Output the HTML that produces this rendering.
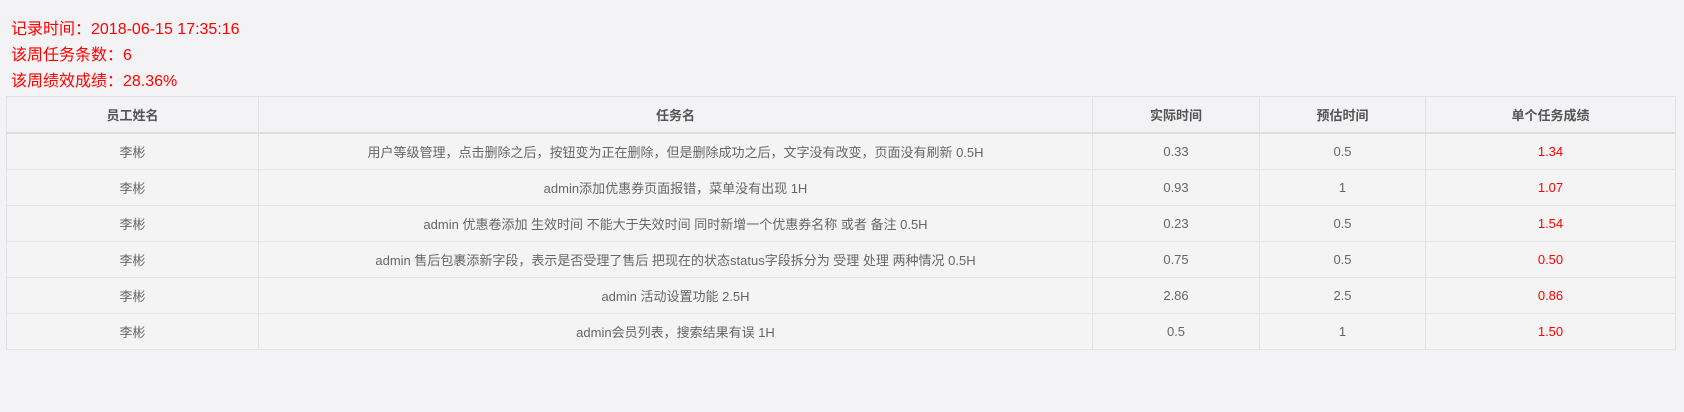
<!DOCTYPE html>
<html><head><meta charset="utf-8"><style>
html,body{margin:0;padding:0;background:#f3f3f5;width:1684px;height:412px;overflow:hidden;font-family:"Liberation Sans","Noto Sans CJK SC",sans-serif;}
.info{position:absolute;left:11px;color:#ff0000;font-size:16px;line-height:20px;}
table{position:absolute;left:6px;top:96px;width:1670px;border-collapse:collapse;table-layout:fixed;font-size:13px;color:#666;background:#f4f4f5;}
td,th{border:1px solid #e2e2e4;text-align:center;height:35px;padding:0;}
th{font-weight:bold;color:#555;background:#f3f3f5;border-bottom:2px solid #ddd;}
.r{color:#ff0000;}
</style></head><body>
<div class="info" style="top:20px">记录时间：2018-06-15 17:35:16</div>
<div class="info" style="top:46px">该周任务条数：6</div>
<div class="info" style="top:72px">该周绩效成绩：28.36%</div>
<table>
<colgroup><col style="width:252px"><col style="width:834px"><col style="width:167px"><col style="width:166px"><col></colgroup>
<tr><th>员工姓名</th><th>任务名</th><th>实际时间</th><th>预估时间</th><th>单个任务成绩</th></tr>
<tr><td>李彬</td><td>用户等级管理，点击删除之后，按钮变为正在删除，但是删除成功之后，文字没有改变，页面没有刷新 0.5H</td><td>0.33</td><td>0.5</td><td class="r">1.34</td></tr>
<tr><td>李彬</td><td>admin添加优惠券页面报错，菜单没有出现 1H</td><td>0.93</td><td>1</td><td class="r">1.07</td></tr>
<tr><td>李彬</td><td>admin 优惠卷添加 生效时间 不能大于失效时间 同时新增一个优惠券名称 或者 备注 0.5H</td><td>0.23</td><td>0.5</td><td class="r">1.54</td></tr>
<tr><td>李彬</td><td>admin 售后包裹添新字段，表示是否受理了售后 把现在的状态status字段拆分为 受理 处理 两种情况 0.5H</td><td>0.75</td><td>0.5</td><td class="r">0.50</td></tr>
<tr><td>李彬</td><td>admin 活动设置功能 2.5H</td><td>2.86</td><td>2.5</td><td class="r">0.86</td></tr>
<tr><td>李彬</td><td>admin会员列表，搜索结果有误 1H</td><td>0.5</td><td>1</td><td class="r">1.50</td></tr>
</table>
</body></html>
